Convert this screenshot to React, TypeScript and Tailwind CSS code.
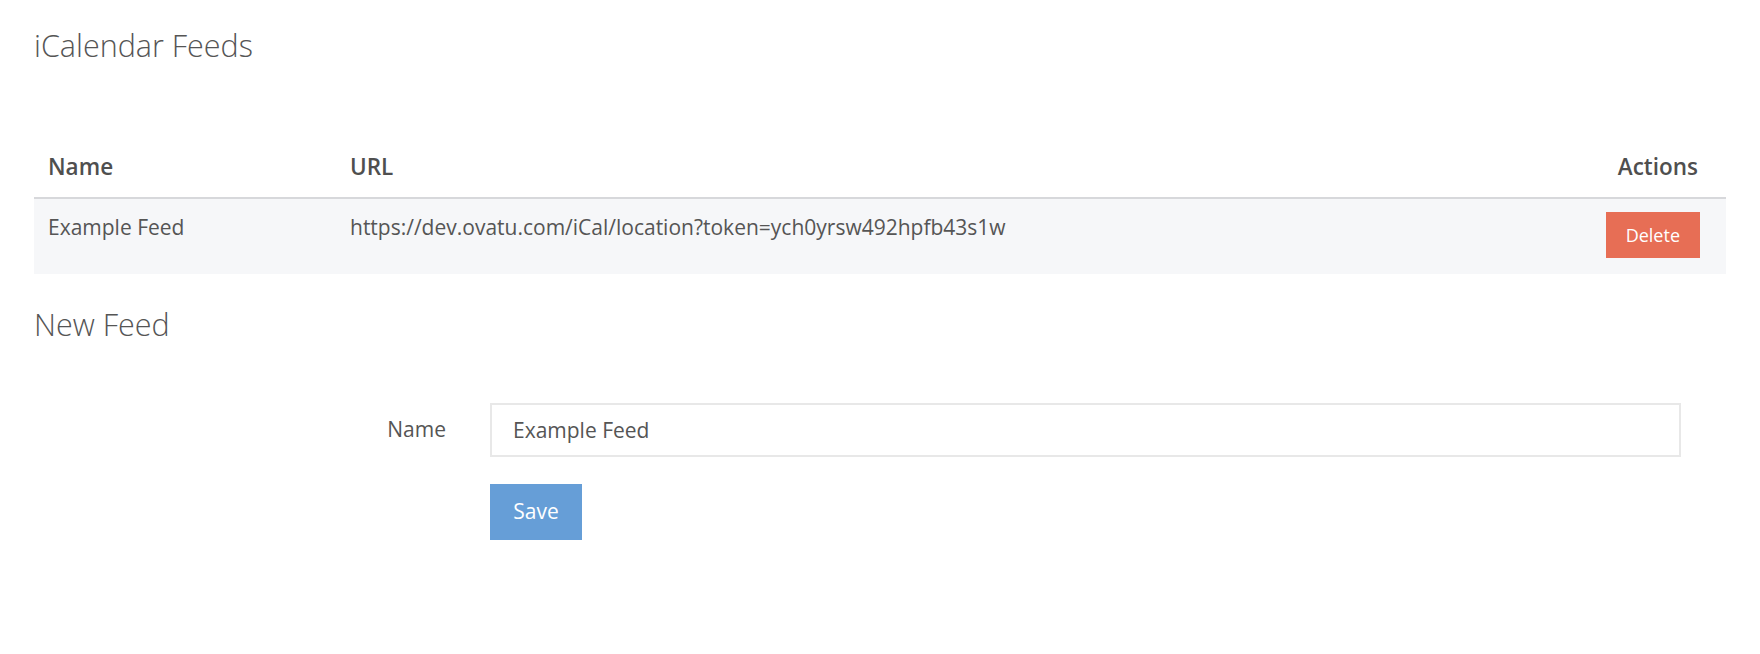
export default function App() {
  const feeds = [
    {
      name: "Example Feed",
      url: "https://dev.ovatu.com/iCal/location?token=ych0yrsw492hpfb43s1w",
    },
  ]

  return (
    <div className="min-h-[654px] bg-white px-[34px] pt-[29px] text-[#555555] font-['Open_Sans',sans-serif]">
      <h3 className="text-[30.5px] font-light leading-[33px] text-[#555555]">iCalendar Feeds</h3>

      {/* tabela de feeds */}
      <table className="mt-[74px] w-full border-collapse text-[21px]">
        <thead>
          <tr>
            <th className="h-[62px] w-[316px] border-b-2 border-[#d7d8db] pl-[14px] text-left align-middle text-[22.5px] font-semibold text-[#4f4f4f]">Name</th>
            <th className="h-[62px] border-b-2 border-[#d7d8db] text-left align-middle text-[22.5px] font-semibold text-[#4f4f4f]">URL</th>
            <th className="h-[62px] border-b-2 border-[#d7d8db] pr-[28px] text-right align-middle text-[22.5px] font-semibold text-[#4f4f4f]">Actions</th>
          </tr>
        </thead>
        <tbody>
          {feeds.map((feed, idx) => (
            <tr key={idx} className="bg-[#f6f7f9]">
              <td className="h-[76px] pl-[14px] pt-[13px] align-top leading-[30px]">{feed.name}</td>
              <td className="h-[76px] pt-[13px] align-top leading-[30px]">{feed.url}</td>
              <td className="h-[76px] pr-[26px] pt-[13px] text-right align-top">
                <button className="h-[46px] bg-[#e76e55] px-[20px] text-[18px] text-white">Delete</button>
              </td>
            </tr>
          ))}
        </tbody>
      </table>

      <h3 className="mt-[34px] text-[30.5px] font-light leading-[33px] text-[#555555]">New Feed</h3>

      {/* formulário */}
      <form className="mt-[62px] pb-[114px]">
        <div className="flex items-center">
          <label className="w-[412px] text-right text-[21px]">Name</label>
          <input
            type="text"
            defaultValue="Example Feed"
            className="ml-[44px] mr-[45px] h-[54px] flex-1 border-2 border-[#e8e8e8] px-[21px] text-[21px] text-[#555555] outline-none"
          />
        </div>
        <button type="button" className="ml-[456px] mt-[27px] h-[56px] w-[92px] bg-[#669ed7] text-[21px] text-white">
          Save
        </button>
      </form>
    </div>
  )
}
